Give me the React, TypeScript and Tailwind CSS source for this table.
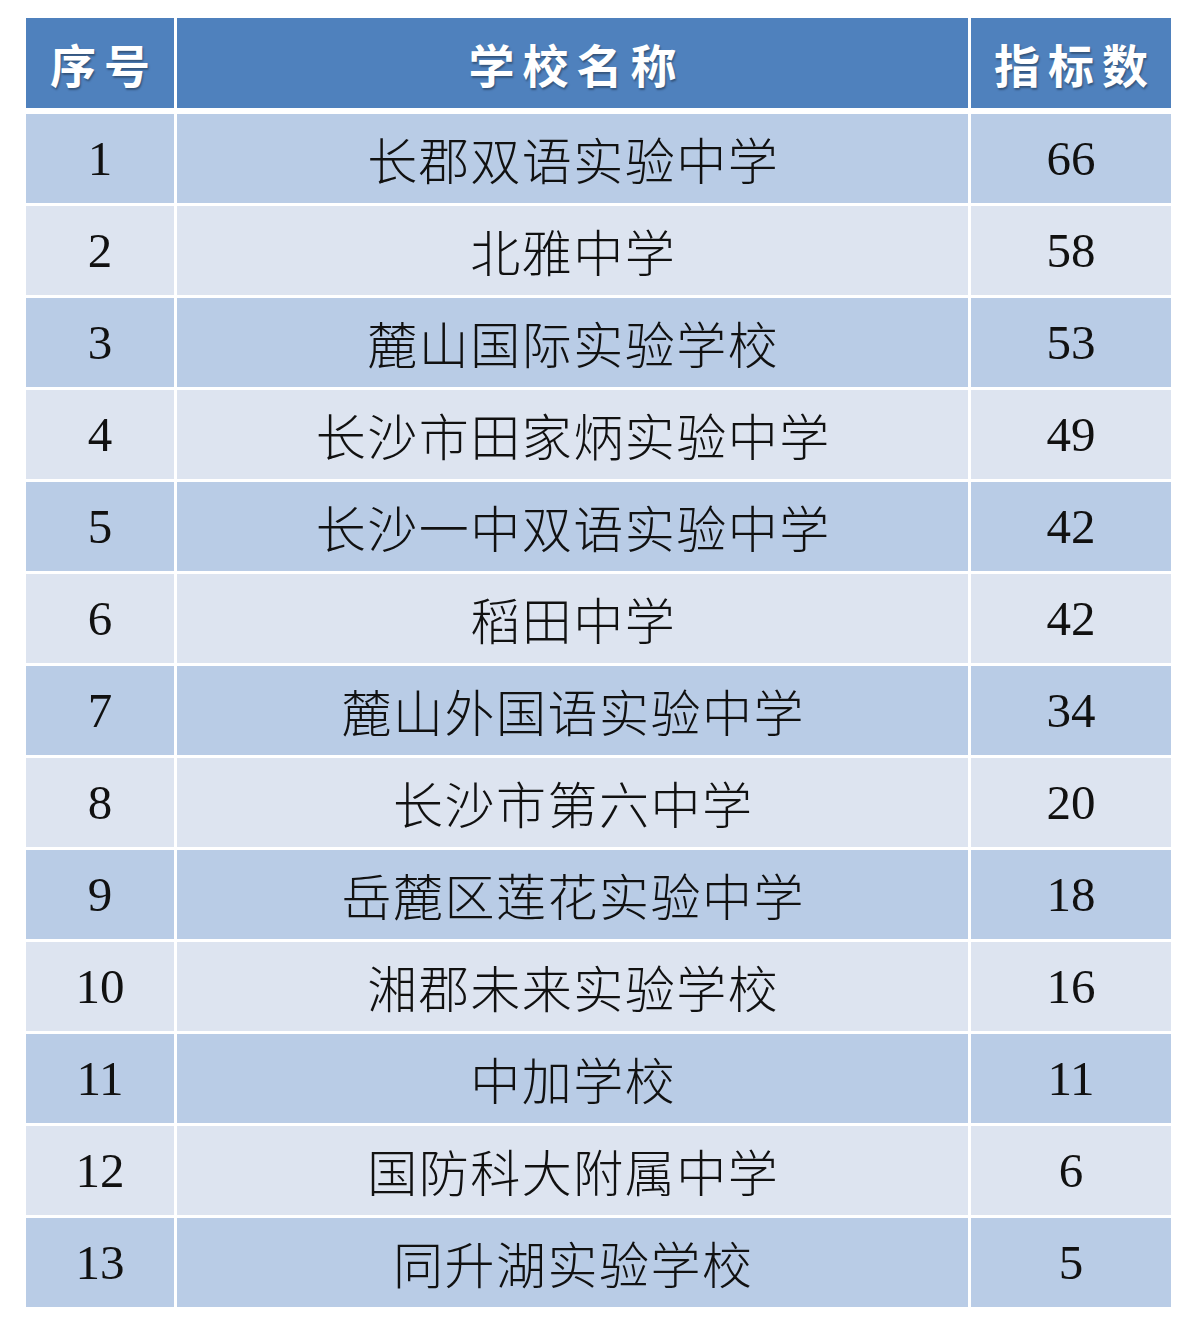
const rows: [number, string, number][] = [
  [1, "长郡双语实验中学", 66],
  [2, "北雅中学", 58],
  [3, "麓山国际实验学校", 53],
  [4, "长沙市田家炳实验中学", 49],
  [5, "长沙一中双语实验中学", 42],
  [6, "稻田中学", 42],
  [7, "麓山外国语实验中学", 34],
  [8, "长沙市第六中学", 20],
  [9, "岳麓区莲花实验中学", 18],
  [10, "湘郡未来实验学校", 16],
  [11, "中加学校", 11],
  [12, "国防科大附属中学", 6],
  [13, "同升湖实验学校", 5],
];

const cjk = "font-['Noto_Sans_CJK_SC','Noto_Sans',sans-serif]";
const num = "font-['Liberation_Serif','DejaVu_Serif',serif]";

export default function App() {
  return (
    <div className="w-[1188px] h-[1326px] bg-white pt-[18px] pl-[26px]">
      <div className="flex flex-col gap-[3px] w-[1145px]">
        {/* header */}
        <div className="grid grid-cols-[148px_791px_200px] gap-[3px] h-[90px] mb-[3px]">
          {["序号", "学校名称", "指标数"].map((h) => (
            <div
              key={h}
              className={`bg-[#4f81bd] flex items-center justify-center text-white text-[46px] font-bold tracking-[8px] pl-[8px] [text-shadow:1px_2px_2px_rgba(0,0,0,0.35)] ${cjk}`}
            >
              {h}
            </div>
          ))}
        </div>

        {rows.map(([no, name, count], i) => {
          const bg = i % 2 === 0 ? "bg-[#b9cce6]" : "bg-[#dde4f0]";
          return (
            <div key={no} className="grid grid-cols-[148px_791px_200px] gap-[3px] h-[89px] text-[#111]">
              <div className={`${bg} flex items-center justify-center text-[49px] ${num}`}>{no}</div>
              <div className={`${bg} flex items-center justify-center text-[50px] font-light tracking-[1.5px] pl-[1.5px] ${cjk}`}>
                {name}
              </div>
              <div className={`${bg} flex items-center justify-center text-[49px] ${num}`}>{count}</div>
            </div>
          );
        })}
      </div>
    </div>
  );
}
